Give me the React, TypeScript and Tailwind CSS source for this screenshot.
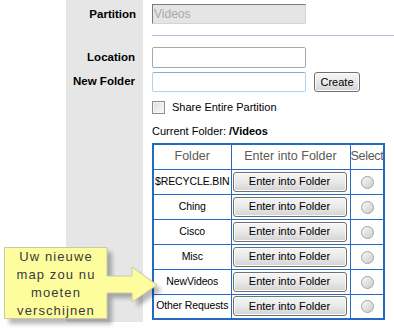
import React from "react";

const folders = ["$RECYCLE.BIN", "Ching", "Cisco", "Misc", "NewVideos", "Other Requests"];

// Small windows-style push button
const Button = ({ children, className = "" }: { children: React.ReactNode; className?: string }) => (
  <button
    type="button"
    className={`flex items-center justify-center rounded-[3px] border border-[#707070] bg-linear-to-b from-[#f6f6f6] via-[#e9e9e9] to-[#d3d3d3] text-[11px] leading-none text-black shadow-[inset_0_0_0_1px_#fcfcfc] ${className}`}
  >
    {children}
  </button>
);

const Radio = () => (
  <span className="block h-[13px] w-[13px] rounded-full border border-[#a3a3a3] bg-linear-to-br from-[#f8f8f8] to-[#cdcdcd]" />
);

const Callout = () => (
  <div className="absolute left-0 top-[240px] h-[88px] w-[170px]">
    <svg width="170" height="88" viewBox="0 0 170 88" className="absolute left-0 top-0">
      <defs>
        <filter id="blur" x="-20%" y="-20%" width="140%" height="140%">
          <feGaussianBlur stdDeviation="2" />
        </filter>
      </defs>
      <path
        d="M4 7H107V36H132V27L157 45L132 62V53H107V79H4Z"
        transform="translate(5 5)"
        fill="#000"
        opacity="0.28"
        filter="url(#blur)"
      />
      <path d="M4.5 7.5H107V36H132V27L157 45L132 62V53H107V78.5H4.5Z" fill="#fdfd9e" stroke="#c9c9a6" strokeWidth="1" />
    </svg>
    <div className="absolute left-[4px] top-[8px] w-[104px] text-center text-[13px] leading-[18px] tracking-[1.1px] text-[#3a3a3a]">
      <div>Uw nieuwe</div>
      <div>map zou nu</div>
      <div>moeten</div>
      <div>verschijnen</div>
    </div>
  </div>
);

export default function App() {
  return (
    <div className="relative h-[328px] w-[394px] overflow-hidden bg-white text-[11px] text-black [font-family:'Liberation_Sans',Arial,sans-serif]">
      <div className="flex">
        <div className="w-[66px] shrink-0" />

        {/* label column */}
        <div className="flex h-[322px] w-[77px] shrink-0 flex-col items-end bg-[#e6e6e6] pr-[7px] text-[11.5px] font-bold">
          <div className="mt-[6px] h-[16px] leading-[16px]">Partition</div>
          <div className="mt-[27px] h-[16px] leading-[16px] mr-[1px]">Location</div>
          <div className="mt-[8px] h-[16px] leading-[16px] mr-[1px]">New Folder</div>
        </div>

        {/* form column */}
        <div className="flex min-w-0 flex-1 flex-col pl-[9px]">
          <div className="mt-[4px] flex h-[20px] w-[154px] items-center border border-t-[#7a7a7a] border-l-[#7a7a7a] border-b-[#d4d4d4] border-r-[#d4d4d4] bg-[#e5e5e5] pl-[1px] text-[12px] text-[#a9a9a9]">
            Videos
          </div>

          <div className="mt-[11px] h-px w-full bg-[#b6b6e4]" />

          <div className="mt-[11px] h-[21px] w-[154px] rounded-[2px] border border-[#a8a8a8] bg-white" />

          <div className="mt-[4px] flex items-center gap-[8px]">
            <div className="h-[20px] w-[154px] rounded-[2px] border border-[#b3d2ee] border-t-[#7fb0de] bg-white" />
            <Button className="h-[20px] w-[46px]">Create</Button>
          </div>

          <div className="mt-[8px] flex items-center gap-[7px]">
            <span className="block h-[13px] w-[13px] border border-[#8e8f8f] bg-linear-to-br from-[#dcdcdc] to-[#fbfbfb] shadow-[inset_0_0_0_1px_#f4f4f4]" />
            <span className="leading-[14px]">Share Entire Partition</span>
          </div>

          <div className="mt-[10px] h-[14px] leading-[14px]">
            Current Folder: <b>/Videos</b>
          </div>

          <table className="mt-[5px] w-[231px] table-fixed border-collapse border-2 border-[#2469c2]">
            <colgroup>
              <col className="w-[78px]" />
              <col className="w-[119px]" />
              <col className="w-[34px]" />
            </colgroup>
            <thead>
              <tr className="h-[25px] text-[12.5px] text-[#5e5953]">
                <th className="border border-[#2469c2] p-0 font-normal">Folder</th>
                <th className="border border-[#2469c2] p-0 font-normal">Enter into Folder</th>
                <th className="whitespace-nowrap border border-[#2469c2] p-0 text-left font-normal tracking-[-0.3px]">Select</th>
              </tr>
            </thead>
            <tbody>
              {folders.map((name) => (
                <tr key={name} className="h-[25px]">
                  <td className="whitespace-nowrap border border-[#2469c2] p-0 text-center text-[10.5px] tracking-[-0.1px]">{name}</td>
                  <td className="border border-[#2469c2] p-0 pl-[1px]">
                    <Button className="h-[20px] w-[114px]">Enter into Folder</Button>
                  </td>
                  <td className="border border-[#2469c2] p-0">
                    <div className="flex justify-center pl-[2px] pt-[1px]">
                      <Radio />
                    </div>
                  </td>
                </tr>
              ))}
            </tbody>
          </table>
        </div>
      </div>

      <Callout />
    </div>
  );
}
